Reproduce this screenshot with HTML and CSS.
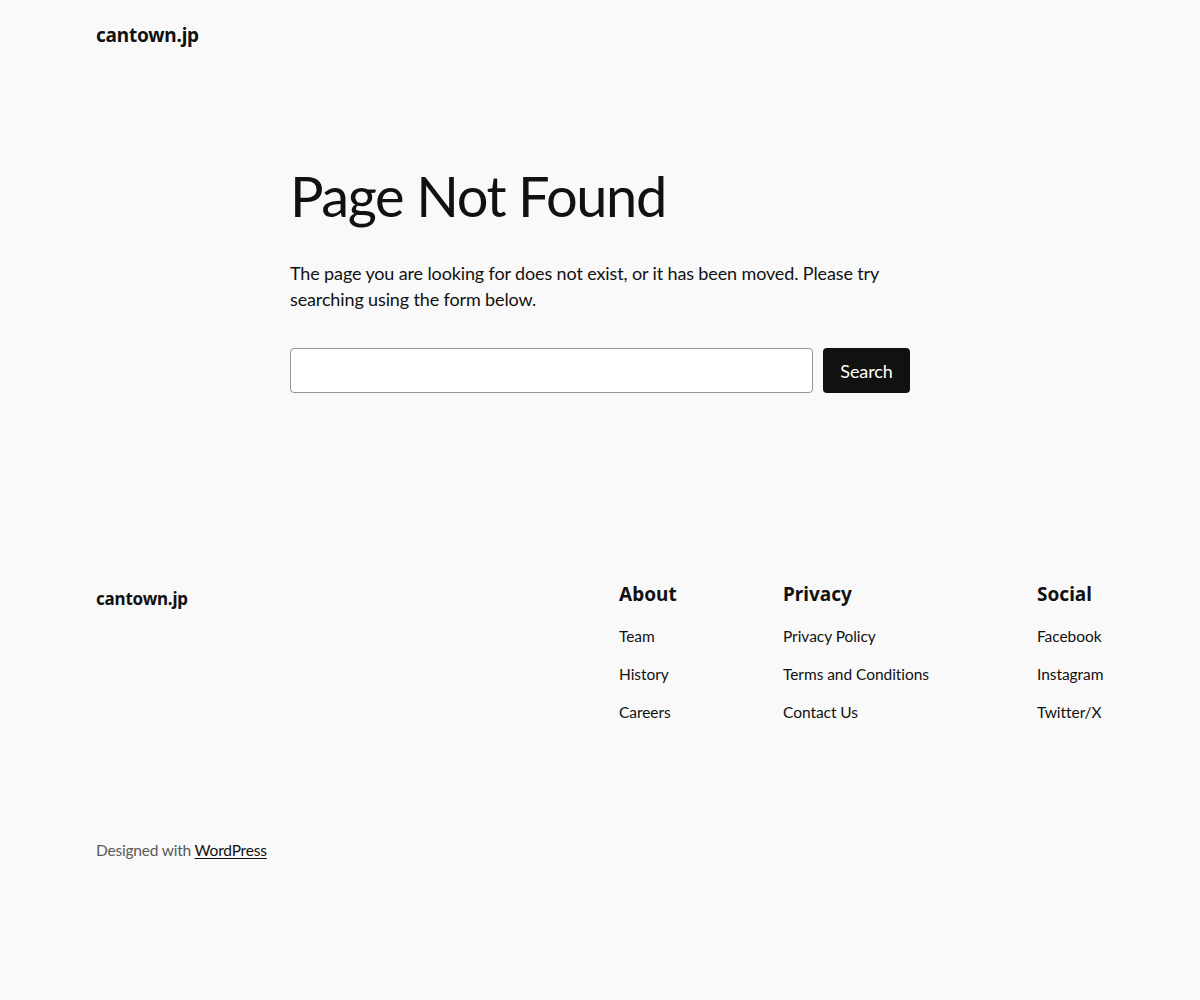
FILE: index.html
```html
<!DOCTYPE html>
<html lang="en">
<head>
    <meta charset="UTF-8">
    <meta name="viewport" content="width=device-width, initial-scale=1.0">
    <title>Page Not Found – cantown.jp</title>
    <link rel="stylesheet" href="styles.css">
</head>
<body>
    <header class="site-header">
        <a class="site-title" href="#">cantown.jp</a>
    </header>

    <main class="content">
        <h1 class="page-title">Page Not Found</h1>
        <p class="lead">The page you are looking for does not exist, or it has been moved. Please try searching using the form below.</p>
        <form class="search-form" onsubmit="return false;">
            <input class="search-input" type="search" aria-label="Search">
            <button class="search-button" type="submit">Search</button>
        </form>
    </main>

    <footer class="site-footer">
        <div class="footer-top">
            <a class="footer-title" href="#">cantown.jp</a>
            <div class="footer-nav">
                <div class="footer-col">
                    <h2>About</h2>
                    <a href="#">Team</a>
                    <a href="#">History</a>
                    <a href="#">Careers</a>
                </div>
                <div class="footer-col">
                    <h2>Privacy</h2>
                    <a href="#">Privacy Policy</a>
                    <a href="#">Terms and Conditions</a>
                    <a href="#">Contact Us</a>
                </div>
                <div class="footer-col">
                    <h2>Social</h2>
                    <a href="#">Facebook</a>
                    <a href="#">Instagram</a>
                    <a href="#">Twitter/X</a>
                </div>
            </div>
        </div>
        <p class="credit">Designed with <a href="#">WordPress</a></p>
    </footer>
</body>
</html>
```

FILE: styles.css
```css
body {
    margin: 0;
    background-color: #f9f9f9;
    color: #111111;
    font-family: 'Lato', 'Liberation Sans', sans-serif;
}

a {
    color: inherit;
    text-decoration: none;
}

.site-header {
    padding: 22px 96px 0;
    height: 40px;
}

.site-title,
.footer-title {
    font-family: 'Noto Sans', 'DejaVu Sans', sans-serif;
    font-weight: 700;
    font-size: 19px;
    letter-spacing: -0.2px;
}

.footer-title {
    font-size: 17px;
}

.content {
    width: 620px;
    margin: 0 auto;
    padding-top: 100px;
    padding-bottom: 186px;
}

.page-title {
    font-weight: 400;
    font-size: 56px;
    line-height: 1.2;
    margin: 0 0 31px;
    letter-spacing: -1.4px;
}

.lead {
    font-size: 18px;
    line-height: 26px;
    margin: 0 0 36px;
    letter-spacing: -0.13px;
}

.search-form {
    display: flex;
    gap: 10px;
}

.search-input {
    flex: 1;
    height: 45px;
    box-sizing: border-box;
    border: 1px solid #949494;
    border-radius: 4px;
    background: #ffffff;
    font-family: inherit;
    font-size: 18px;
    padding: 0 12px;
}

.search-button {
    width: 87px;
    height: 45px;
    border: none;
    border-radius: 4px;
    background-color: #111111;
    color: #ffffff;
    font-family: inherit;
    font-size: 18px;
    letter-spacing: -0.1px;
    cursor: pointer;
}

.site-footer {
    padding: 0 96px;
}

.footer-top {
    display: flex;
    justify-content: space-between;
    align-items: flex-start;
    padding-top: 8px;
}

.footer-nav {
    display: grid;
    grid-template-columns: 164px 254px 67px;
}

.footer-col {
    display: flex;
    flex-direction: column;
    gap: 16px;
    white-space: nowrap;
}

.footer-col h2 {
    font-family: 'Noto Sans', 'DejaVu Sans', sans-serif;
    font-weight: 700;
    font-size: 19px;
    line-height: 26px;
    margin: -6px 0 2px;
}

.footer-col a {
    font-size: 15.5px;
    line-height: 22px;
    letter-spacing: -0.05px;
}

.credit {
    margin: 118px 0 0;
    font-size: 15.5px;
    color: #5a5a5a;
    letter-spacing: -0.2px;
}

.credit a {
    color: #111111;
    text-decoration: underline;
    text-underline-offset: 2px;
}
```
